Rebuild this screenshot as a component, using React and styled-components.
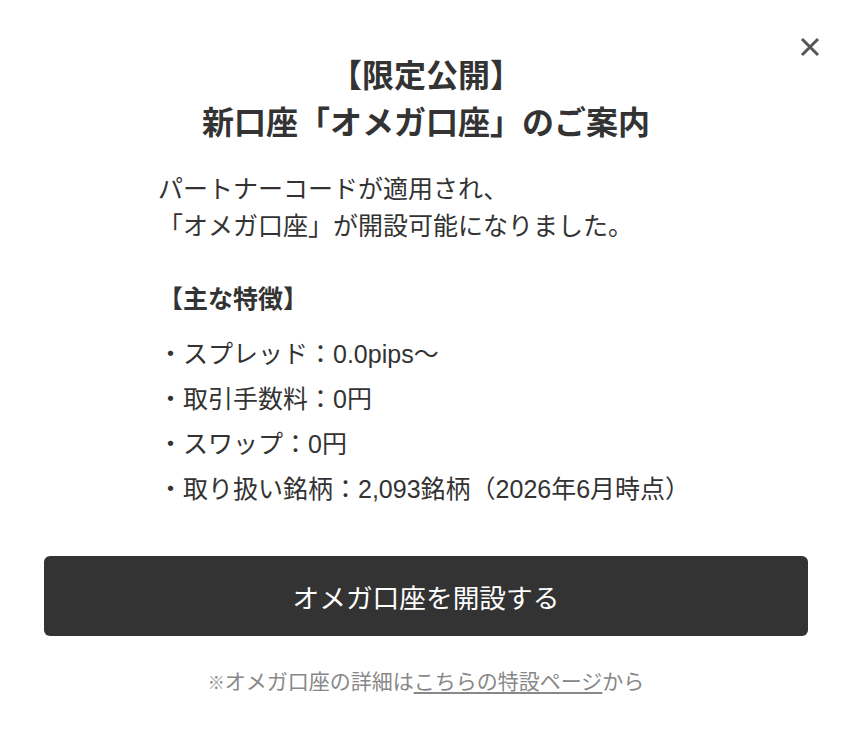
import React from 'react'
import styled, { createGlobalStyle } from 'styled-components'

const GlobalStyle = createGlobalStyle`
  html, body {
    margin: 0;
    padding: 0;
    background: #fff;
  }
  body {
    font-family: "Liberation Sans", "Noto Sans CJK JP", sans-serif;
    color: #333;
  }
`;

const Modal = styled.div`
  position: relative;
  box-sizing: border-box;
  width: 852px;
  min-height: 736px;
  padding: 53px 44px 0;
  background: #fff;
`;

const CloseButton = styled.button`
  position: absolute;
  top: 36px;
  right: 31px;
  width: 22px;
  height: 22px;
  padding: 0;
  border: none;
  background: transparent;
  cursor: pointer;
  display: flex;
  align-items: center;
  justify-content: center;
`;

const Title = styled.h2`
  margin: 0;
  text-align: center;
  font-size: 32px;
  font-weight: bold;
  line-height: 47px;
  color: #333;
`;

const Body = styled.div`
  display: flex;
  justify-content: center;
  margin-top: 24px;
`;

const Block = styled.div`
  width: 536px;
  text-align: left;
`;

const Lead = styled.p`
  margin: 0;
  font-size: 25px;
  line-height: 37px;
`;

const Heading = styled.h3`
  margin: 36px 0 0;
  font-size: 25px;
  font-weight: bold;
  line-height: 37px;
`;

const List = styled.ul`
  list-style: none;
  margin: 14px 0 0;
  padding: 0;
`;

const Item = styled.li`
  font-size: 25px;
  line-height: 45px;
`;

const OpenButton = styled.button`
  display: block;
  width: 100%;
  height: 80px;
  margin-top: 44px;
  border: none;
  border-radius: 6px;
  background: #333;
  color: #fff;
  font-family: inherit;
  font-size: 26.7px;
  cursor: pointer;
`;

const Note = styled.p`
  margin: 30px 0 0;
  text-align: center;
  font-size: 21px;
  line-height: 32px;
  color: #888;
`;

const Mark = styled.span`
  font-size: 17px;
`;

const NoteLink = styled.a`
  color: #888;
  text-decoration: underline;
  text-underline-offset: 3px;
`;

const features = [
  'スプレッド：0.0pips〜',
  '取引手数料：0円',
  'スワップ：0円',
  '取り扱い銘柄：2,093銘柄（2026年6月時点）',
];

const App = () => {
  return (
    <>
      <GlobalStyle />
      <Modal>
        <CloseButton aria-label="閉じる">
          <svg width="20" height="20" viewBox="0 0 20 20">
            <path d="M2 2 L18 18 M18 2 L2 18" stroke="#555" strokeWidth="3" />
          </svg>
        </CloseButton>
        <Title>
          【限定公開】<br />
          新口座「オメガ口座」のご案内
        </Title>
        <Body>
          <Block>
            <Lead>
              パートナーコードが適用され、<br />
              「オメガ口座」が開設可能になりました。
            </Lead>
            <Heading>【主な特徴】</Heading>
            <List>
              {features.map((f) => (
                <Item key={f}>・{f}</Item>
              ))}
            </List>
          </Block>
        </Body>
        <OpenButton>オメガ口座を開設する</OpenButton>
        <Note>
          <Mark>※</Mark>オメガ口座の詳細は<NoteLink href="#">こちらの特設ページ</NoteLink>から
        </Note>
      </Modal>
    </>
  )
}

export default App
